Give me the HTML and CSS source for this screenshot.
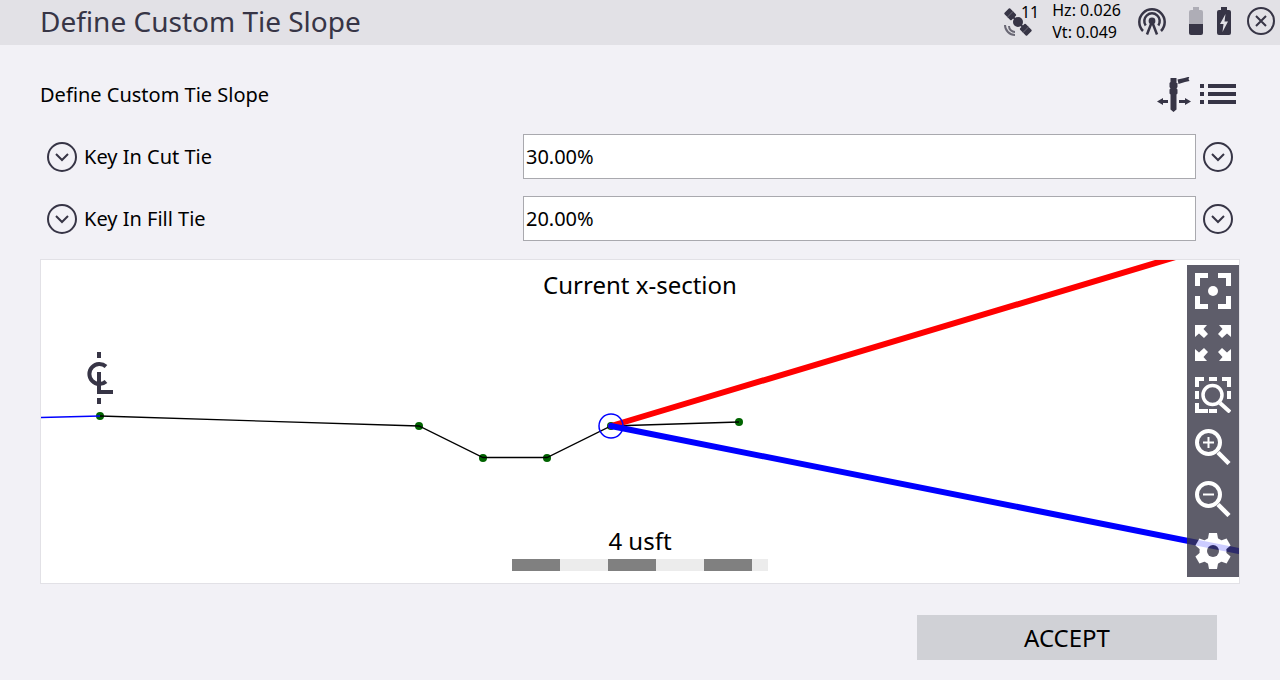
FILE: index.html
```html
<!DOCTYPE html>
<html lang="en">

<head>
    <meta charset="utf-8">
    <meta name="viewport" content="width=device-width, initial-scale=1.0">
    <title>Define Custom Tie Slope</title>
    <link rel="stylesheet" href="styles.css">
</head>

<body>
    <header class="topbar">
        <h1>Define Custom Tie Slope</h1>

        <!-- Status icons -->
        <div class="satellites">
            <svg width="30" height="30" viewBox="0 0 30 30" aria-hidden="true">
                <g transform="rotate(45 15 15)" fill="#373546">
                    <rect x="-1" y="11" width="10" height="8" rx="1" />
                    <rect x="21" y="11" width="10" height="8" rx="1" />
                    <rect x="8" y="14" width="14" height="2" />
                    <circle cx="15" cy="15" r="5" />
                    <path d="M4 11v8M26 11v8" stroke="#5d5b69" stroke-width="1" />
                </g>
                <g fill="none" stroke="#6a6875" stroke-width="2">
                    <path d="M6 19a6 6 0 0 0 6 6" />
                    <path d="M2 18a10 10 0 0 0 10 10" />
                </g>
            </svg>
            <span>11</span>
        </div>
        <div class="accuracy">
            <span>Hz: 0.026</span>
            <span>Vt: 0.049</span>
        </div>
        <svg class="signal" width="28" height="28" viewBox="0 0 28 28" aria-hidden="true">
            <g fill="none" stroke="#373546" stroke-width="2.5">
                <path d="M5 24a12.7 12.7 0 1 1 18 0" />
                <path d="M7.7 18.5a7.7 7.7 0 1 1 12.6 0" />
                <path d="M9 27.5l5-13 5 13" />
            </g>
            <circle cx="14" cy="14" r="3.4" fill="#373546" />
        </svg>
        <div class="batteries">
            <svg width="14" height="28" viewBox="0 0 14 28" aria-hidden="true">
                <path d="M4 0h6v3h2a2 2 0 0 1 2 2v12H0V5a2 2 0 0 1 2-2h2z" fill="#aeadb6" />
                <path d="M0 17h14v9a2 2 0 0 1-2 2H2a2 2 0 0 1-2-2z" fill="#373546" />
            </svg>
            <svg width="14" height="28" viewBox="0 0 14 28" aria-hidden="true">
                <path d="M4 0h6v3h2a2 2 0 0 1 2 2v21a2 2 0 0 1-2 2H2a2 2 0 0 1-2-2V5a2 2 0 0 1 2-2h2z" fill="#373546" />
                <path d="M8.500 7L3 17h3.500l-1 8L11 14.500H7.500z" fill="#e2e1e6" />
            </svg>
        </div>
        <button class="icon-button" aria-label="Close">
            <svg width="28" height="28" viewBox="0 0 28 28" fill="none" stroke="#373546" stroke-width="2">
                <circle cx="14" cy="14" r="13" />
                <path d="M9 9l10 10M19 9L9 19" />
            </svg>
        </button>
    </header>

    <main>
        <div class="subhead">
            <h2>Define Custom Tie Slope</h2>
            <button class="icon-button" aria-label="Pole">
                <svg width="36" height="36" viewBox="0 0 36 36" fill="#373546">
                    <path d="M15.500 1h6v5h1v4l-1 1.500 1 1v4l-1 1v15L18.500 35l-3-2.500V17.500l-1-1v-4l1-1-1-1.500V6l1-1z" />
                    <path d="M22.500 2.500l7-1.500 5-1.500-1 2.500 1 2-4.500 1-6.500 2z" />
                    <path d="M2 24.500L8 21v2h5v3H8v2z" />
                    <path d="M36 24.500L30 21v2h-6v3h6v2z" />
                </svg>
            </button>
            <button class="icon-button list" aria-label="List">
                <svg width="36" height="36" viewBox="0 0 36 36" fill="#373546">
                    <path d="M0 7h4v4H0zM8 7h28v4H8zM0 15h4v4H0zM8 15h28v4H8zM0 23h4v4H0zM8 23h28v4H8z" />
                </svg>
            </button>
        </div>

        <!-- Tie slopes -->
        <form class="fields" id="tie-form">
            <div class="field">
                <button type="button" class="icon-button" aria-label="Cut tie method">
                    <svg width="30" height="30" viewBox="0 0 30 30" fill="none" stroke="#373546" stroke-width="2">
                        <circle cx="15" cy="15" r="14" />
                        <path d="M9 12l6 6 6-6" />
                    </svg>
                </button>
                <label for="cut">Key In Cut Tie</label>
                <input id="cut" type="text" value="30.00%">
                <button type="button" class="icon-button" aria-label="Cut tie options">
                    <svg width="30" height="30" viewBox="0 0 30 30" fill="none" stroke="#373546" stroke-width="2">
                        <circle cx="15" cy="15" r="14" />
                        <path d="M9 12l6 6 6-6" />
                    </svg>
                </button>
            </div>
            <div class="field">
                <button type="button" class="icon-button" aria-label="Fill tie method">
                    <svg width="30" height="30" viewBox="0 0 30 30" fill="none" stroke="#373546" stroke-width="2">
                        <circle cx="15" cy="15" r="14" />
                        <path d="M9 12l6 6 6-6" />
                    </svg>
                </button>
                <label for="fill">Key In Fill Tie</label>
                <input id="fill" type="text" value="20.00%">
                <button type="button" class="icon-button" aria-label="Fill tie options">
                    <svg width="30" height="30" viewBox="0 0 30 30" fill="none" stroke="#373546" stroke-width="2">
                        <circle cx="15" cy="15" r="14" />
                        <path d="M9 12l6 6 6-6" />
                    </svg>
                </button>
            </div>
        </form>

        <!-- Cross section -->
        <section class="section-view">
            <svg class="plot" viewBox="0 0 1198 323">
                <text x="599" y="34">Current x-section</text>

                <!-- centreline mark -->
                <g fill="none" stroke="#373546" stroke-width="4">
                    <path d="M58 92v6M58 138v6" />
                    <path d="M65 106.500A10 10 0 1 0 65 121.500" />
                    <path d="M58 112v20h14" />
                </g>

                <g fill="#006400">
                    <circle cx="59" cy="156" r="4" />
                    <circle cx="378" cy="166" r="4" />
                    <circle cx="442" cy="198" r="4" />
                    <circle cx="506" cy="198" r="4" />
                    <circle cx="570" cy="166" r="4" />
                    <circle cx="698" cy="162" r="4" />
                </g>
                <path class="ground" d="M59 156L378 166l64 31.500h64L570 166l128-4" />
                <path class="ground left" d="M0 157.500L59 156" />

                <path class="cut" d="M570 166L1198-22" />
                <path class="fill" d="M570 166L1198 291" />
                <circle class="hinge" cx="570" cy="166" r="12" />

                <text x="599" y="290">4 usft</text>
                <path fill="#ececec" d="M471 299h256v12H471z" />
                <path fill="#808080" d="M471 299h48v12h-48zM567 299h48v12h-48zM663 299h48v12h-48z" />
            </svg>

            <div class="tools">
                <button aria-label="Centre">
                    <svg width="36" height="36" viewBox="0 0 36 36" fill="#fff">
                        <path d="M0 0h13v5H5v8H0zM23 0h13v13h-5V5h-8zM0 23h5v8h8v5H0zM31 23h5v13H23v-5h8z" />
                        <circle cx="18" cy="18" r="5" />
                    </svg>
                </button>
                <button aria-label="Zoom extents">
                    <svg width="36" height="36" viewBox="0 0 36 36" fill="#fff">
                        <path d="M0 0h12L8.500 4l4.500 5-4 4-5-4.500L0 12z" />
                        <path d="M36 0H24l3.500 4L23 9l4 4 5-4.500 4 3.500z" />
                        <path d="M0 36h12l-3.500-4 4.500-5-4-4-5 4.500L0 24z" />
                        <path d="M36 36H24l3.500-4-4.500-5 4-4 5 4.500 4-3.500z" />
                    </svg>
                </button>
                <button aria-label="Zoom window">
                    <svg width="36" height="36" viewBox="0 0 36 36">
                        <path fill="#fff" d="M0 0h9v4H4v6H0zM14 0h8v4h-8zM27 0h9v10h-4V4h-5zM0 14h4v8H0zM32 14h4v8h-4zM0 26h4v6h9v4H0zM14 32h8v4h-8z" />
                        <circle cx="17.500" cy="18" r="9.500" fill="none" stroke="#373546" stroke-width="5" />
                        <circle cx="17.500" cy="18" r="9.500" fill="none" stroke="#fff" stroke-width="3.500" />
                        <path d="M25 26l10 9" stroke="#fff" stroke-width="4" />
                    </svg>
                </button>
                <button aria-label="Zoom in">
                    <svg width="36" height="36" viewBox="0 0 36 36" fill="none" stroke="#fff">
                        <circle cx="13.500" cy="13.500" r="11.500" stroke-width="4" />
                        <path d="M8 13.500h11M13.500 8v11" stroke-width="2" />
                        <path d="M23 23.500l11 11" stroke-width="4.500" />
                    </svg>
                </button>
                <button aria-label="Zoom out">
                    <svg width="36" height="36" viewBox="0 0 36 36" fill="none" stroke="#fff">
                        <circle cx="13.500" cy="13.500" r="11.500" stroke-width="4" />
                        <path d="M8 13.500h11" stroke-width="2" />
                        <path d="M23 23.500l11 11" stroke-width="4.500" />
                    </svg>
                </button>
                <button aria-label="Settings">
                    <svg width="36" height="36" viewBox="0 0 36 36" fill="#fff">
                        <circle cx="18" cy="18" r="13.500" />
                        <path d="M14 0h8l1.500 8v20L22 36h-8l-1.500-8V8z" />
                        <path d="M14 0h8l1.500 8v20L22 36h-8l-1.500-8V8z" transform="rotate(60 18 18)" />
                        <path d="M14 0h8l1.500 8v20L22 36h-8l-1.500-8V8z" transform="rotate(120 18 18)" />
                        <circle cx="18" cy="18" r="6" fill="#373546" />
                    </svg>
                </button>
            </div>
        </section>
    </main>

    <footer>
        <button class="accept" form="tie-form">ACCEPT</button>
    </footer>
</body>

</html>
```
FILE: styles.css
```css
* {
    box-sizing: border-box;
}

body {
    margin: 0;
    background-color: #f2f1f6;
    color: #000;
    font-family: "Noto Sans", sans-serif;
    font-size: 20px;
}

button,
input {
    font: inherit;
    color: inherit;
}

button {
    border: none;
    padding: 0;
    cursor: pointer;
}

svg {
    display: block;
}

/* TOP BAR */

.topbar {
    display: flex;
    align-items: center;
    height: 45px;
    padding: 0 5px 3px 40px;
    background-color: #e2e1e6;
    font-size: 16px;
}

h1 {
    flex: 1;
    margin: 0;
    font-size: 28px;
    font-weight: normal;
    line-height: 40px;
    color: #373546;
}

.satellites {
    position: relative;
    width: 36px;
    padding-top: 2px;
    margin-right: 13px;
}

.satellites span {
    position: absolute;
    top: -4px;
    right: 0;
    line-height: 22px;
}

.accuracy {
    display: flex;
    flex-direction: column;
    line-height: 22px;
}

.signal {
    margin: 0 23px 0 17px;
}

.batteries {
    display: flex;
    gap: 14px;
    margin-right: 16px;
}

.icon-button {
    display: flex;
    justify-content: center;
    align-items: center;
    background: none;
}

/* FIELDS */

main {
    padding: 32px 40px 31px;
}

.subhead {
    display: flex;
    align-items: center;
    padding-right: 4px;
    margin-bottom: 21px;
}

h2 {
    flex: 1;
    margin: 0;
    font-size: 20px;
    font-weight: normal;
    line-height: 36px;
}

.list {
    margin-left: 9px;
}

.fields {
    display: grid;
    row-gap: 17px;
    margin-bottom: 18px;
}

.field {
    display: grid;
    grid-template-columns: 44px 15fr 23fr 44px;
    align-items: center;
}

.field input {
    width: 100%;
    height: 45px;
    padding: 0 2px;
    border: 1px solid #a9a9ae;
    border-radius: 0;
    background-color: #fff;
}

/* CROSS SECTION */

.section-view {
    position: relative;
    border: 1px solid #e2e1e6;
    background-color: #fff;
}

.plot {
    width: 100%;
    height: auto;
}

.plot text {
    font-size: 24px;
    text-anchor: middle;
}

.ground {
    fill: none;
    stroke: #000;
    stroke-width: 1.3;
}

.ground.left {
    stroke: #00f;
}

.cut,
.fill {
    stroke: #f00;
    stroke-width: 6;
    stroke-linecap: round;
}

.fill {
    stroke: #00f;
}

.hinge {
    fill: none;
    stroke: #00f;
    stroke-width: 1.5;
}

.tools {
    position: absolute;
    top: 5px;
    right: 0;
    display: flex;
    flex-direction: column;
    background-color: #373546;
    opacity: .8;
}

.tools button {
    padding: 8px;
    background: none;
}

/* FOOTER */

footer {
    display: flex;
    justify-content: flex-end;
    padding: 0 63px 20px;
}

.accept {
    width: 300px;
    height: 45px;
    background-color: #d0d1d6;
    font-size: 24px;
}
```
